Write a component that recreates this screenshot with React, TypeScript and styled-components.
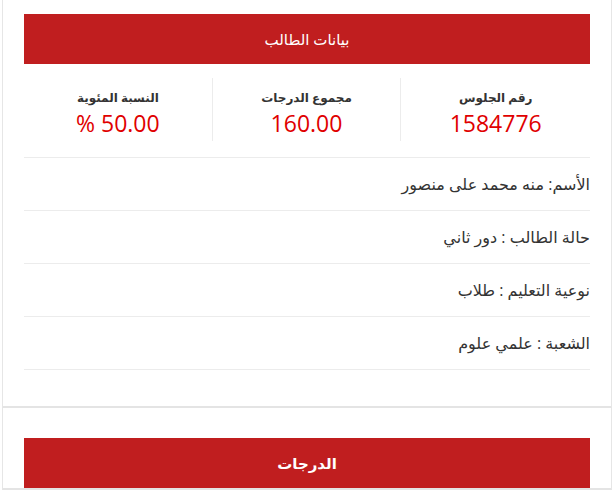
import React from 'react';
import styled, { createGlobalStyle } from 'styled-components';

const GlobalStyle = createGlobalStyle`
  body {
    margin: 0;
    background: #fff;
    font-family: "Open Sans", "DejaVu Sans", sans-serif;
    color: #333;
  }
`;

const Page = styled.div`
  width: 610px;
  margin-left: 2px;
  direction: rtl;
`;

const Card = styled.section<{ $top?: boolean }>`
  border-left: 1px solid #e6e6e6;
  border-right: 1px solid #e6e6e6;
  border-bottom: 2px solid #e4e4e4;
  padding: ${(p) => (p.$top ? '14px 21px 36px' : '30px 21px 0')};
`;

const TitleBar = styled.div<{ $bold?: boolean }>`
  background: #c01e1f;
  color: #fff;
  height: 50px;
  display: flex;
  align-items: center;
  justify-content: center;
  font-size: 15px;
  font-weight: ${(p) => (p.$bold ? 700 : 400)};
`;

const StatsRow = styled.div`
  display: grid;
  grid-template-columns: repeat(3, 1fr);
  padding: 14px 0 16px;
  border-bottom: 1px solid #ececec;
`;

const Stat = styled.div`
  display: flex;
  flex-direction: column;
  align-items: center;
  padding: 10px 0 3px;
  & + & {
    border-right: 1px solid #ececec;
  }
`;

const StatLabel = styled.div`
  font-size: 12px;
  font-weight: 700;
  line-height: 20px;
  color: #333;
`;

const StatValue = styled.div`
  font-size: 23px;
  line-height: 30px;
  color: #e00000;
  direction: ltr;
`;

const InfoRow = styled.div`
  height: 52px;
  display: flex;
  align-items: center;
  font-size: 16px;
  color: #333;
  border-bottom: 1px solid #ececec;
`;

const stats = [
  { label: 'رقم الجلوس', value: '1584776' },
  { label: 'مجموع الدرجات', value: '160.00' },
  { label: 'النسبة المئوية', value: '% 50.00' },
];

const info = [
  'الأسم: منه محمد على منصور',
  'حالة الطالب : دور ثاني',
  'نوعية التعليم : طلاب',
  'الشعبة : علمي علوم',
];

export default function App() {
  return (
    <>
      <GlobalStyle />
      <Page>
        <Card $top>
          <TitleBar>بيانات الطالب</TitleBar>
          <StatsRow>
            {stats.map((s) => (
              <Stat key={s.label}>
                <StatLabel>{s.label}</StatLabel>
                <StatValue>{s.value}</StatValue>
              </Stat>
            ))}
          </StatsRow>
          {info.map((line) => (
            <InfoRow key={line}>{line}</InfoRow>
          ))}
        </Card>
        <Card>
          <TitleBar $bold>الدرجات</TitleBar>
        </Card>
      </Page>
    </>
  );
}
